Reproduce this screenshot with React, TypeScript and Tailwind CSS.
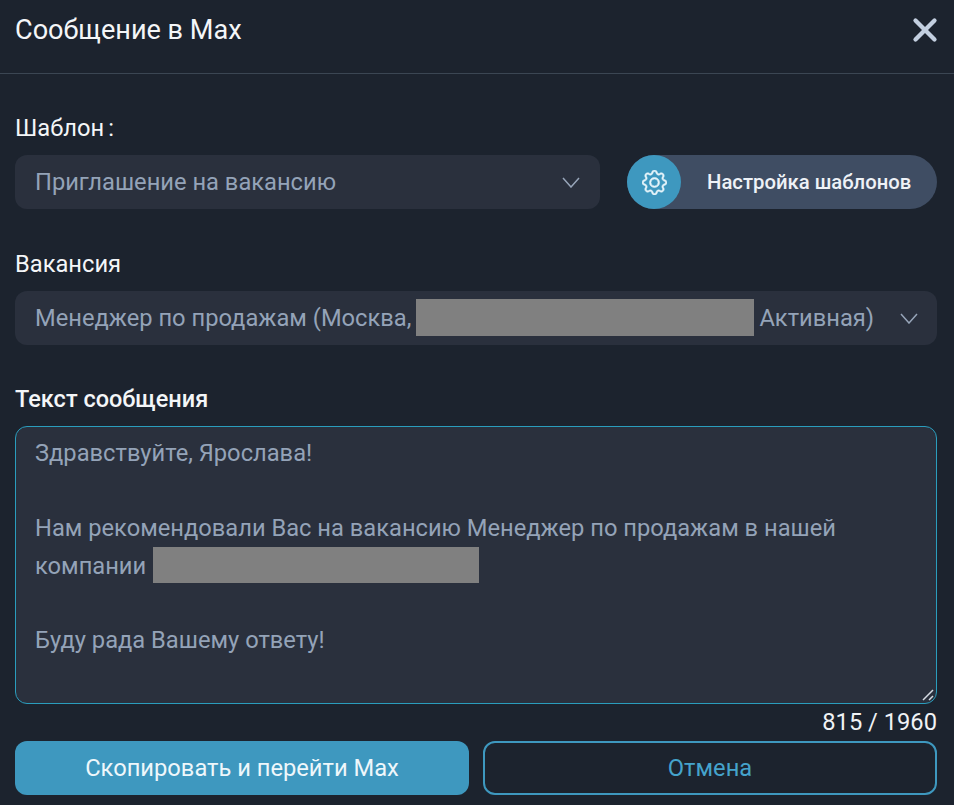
import { X } from "lucide-react";
import { BsGear } from "react-icons/bs";

function Redact({ w, h }: { w: number; h: number }) {
  return <span className="inline-block bg-[#808080] align-middle" style={{ width: w, height: h }} />;
}

function Chevron() {
  return (
    <svg width="18" height="11" viewBox="0 0 18 11" fill="none" className="shrink-0 text-[#97a5b9]">
      <path d="M1 1l8 9 8-9" stroke="currentColor" strokeWidth="1.5" />
    </svg>
  );
}

export default function App() {
  return (
    <div className="w-[954px] h-[805px] overflow-hidden bg-[#1c232e] font-['Roboto',sans-serif] text-white flex flex-col">
      <div className="h-[74px] shrink-0 border-b border-[#3b4653] flex items-center justify-between pl-[15px] pr-[10px] pb-[14px]">
        <h1 className="text-[27.1px] leading-8 font-normal text-[#f4f6f8]">Сообщение в Max</h1>
        <X size={38} strokeWidth={2.7} className="text-[#c3cfe0]" />
      </div>
      <div className="flex-1 flex flex-col pl-[15px] pr-[17px] pt-[40px]">
        <label className="text-[23.7px] leading-7 h-[28px] text-[#f4f6f8]">Шаблон<span className="ml-[4px]">:</span></label>
        <div className="flex mt-[13px] gap-[27px]">
          <div className="w-[585px] h-[54px] rounded-xl bg-[#2a303d] flex items-center justify-between pl-5 pr-[20px] text-[23.7px] text-[#94a3b8]">
            <span className="pt-[2px]">Приглашение на вакансию</span>
            <Chevron />
          </div>
          <div className="w-[310px] h-[54px] rounded-full bg-[#3f4d63] flex items-center">
            <div className="w-[54px] h-[54px] rounded-full bg-[#3e98bf] flex items-center justify-center shrink-0">
              <BsGear size={25} stroke="currentColor" strokeWidth={0.35} className="text-[#e6f4fa]" />
            </div>
            <span className="ml-[26px] text-[20.3px] font-medium text-[#eef2f7]">Настройка шаблонов</span>
          </div>
        </div>
        <label className="mt-[41px] text-[23.7px] leading-7 h-[28px] text-[#f4f6f8]">Вакансия</label>
        <div className="mt-[13px] h-[54px] rounded-xl bg-[#2a303d] flex items-center justify-between pl-5 pr-[19px] text-[23.7px] text-[#94a3b8]">
          <span className="flex items-center whitespace-nowrap">
            <span className="pt-[2px]">Менеджер по продажам (Москва,</span>
            <span className="ml-[5px] mr-[5px] flex"><Redact w={338} h={37} /></span>
            <span className="pt-[2px]">Активная)</span>
          </span>
          <Chevron />
        </div>
        <label className="mt-[40px] text-[23.5px] leading-7 h-[28px] font-medium text-[#f4f6f8]">Текст сообщения</label>
        <div className="relative mt-[13px] h-[278px] rounded-xl bg-[#2a303d] border-[1.5px] border-[#2a9dbd] pl-[19px] pr-4 pt-[8px] text-[23.7px] leading-[37.5px] text-[#94a3b8]">
          <p>Здравствуйте, Ярослава!</p>
          <p className="mt-[37.5px] whitespace-nowrap">Нам рекомендовали Вас на вакансию Менеджер по продажам в нашей</p>
          <p className="flex items-center h-[37.5px]">
            компании<span className="ml-[7px] -mt-[3px] flex"><Redact w={326} h={36} /></span>
          </p>
          <p className="mt-[37px]">Буду рада Вашему ответу!</p>
          <svg width="14" height="14" viewBox="0 0 14 14" fill="none" className="absolute right-[1px] bottom-[1px]">
            <path d="M2 12L12 2M8 12l4-4" stroke="#d5dbe3" strokeWidth="1.5" />
          </svg>
        </div>
        <div className="h-[37px] flex items-center justify-end text-[23.7px] text-[#f0f2f5]">815 / 1960</div>
        <div className="flex gap-[14px]">
          <button className="w-[454px] h-[54px] rounded-xl bg-[#3e98bf] pt-[1px] text-[23.7px] text-[#eef7fb]">Скопировать и перейти Max</button>
          <button className="w-[454px] h-[54px] rounded-xl border-2 border-[#3e98bf] pt-[1px] text-[23.7px] text-[#45a3cc]">Отмена</button>
        </div>
      </div>
    </div>
  );
}
